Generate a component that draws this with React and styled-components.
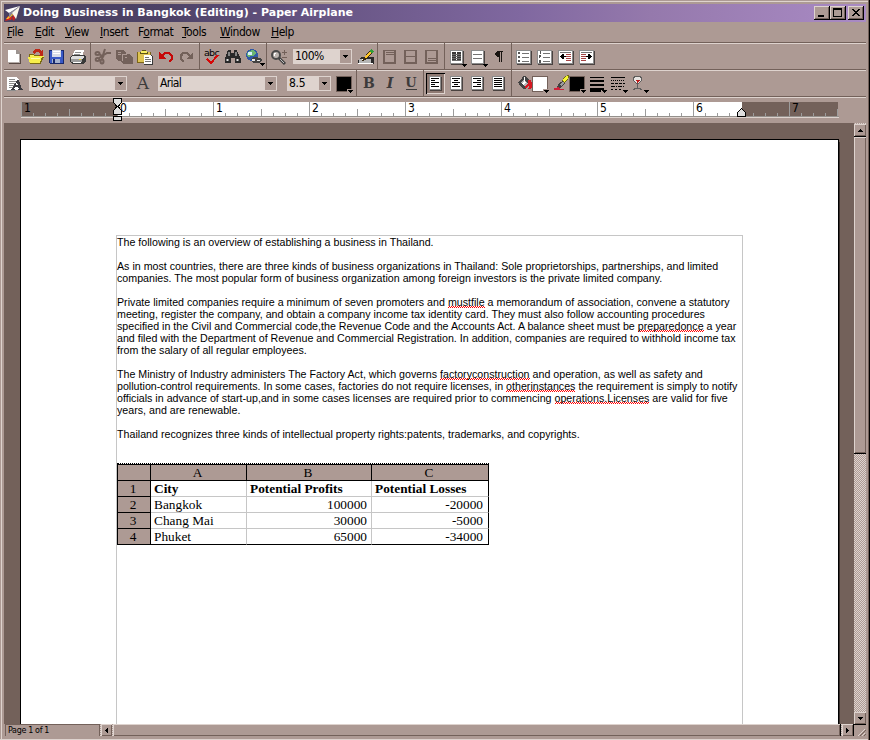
import React from "react";
import styled, { createGlobalStyle, css } from "styled-components";

const face = "#ad9a94";
const light = "#ded3ce";
const dark = "#73615a";

const GlobalStyle = createGlobalStyle`
  * { box-sizing: border-box; }
  body { margin: 0; background: ${face}; }
`;

const checker = css`
  background: repeating-conic-gradient(${light} 0 25%, ${face} 0 50%) 0 0 / 2px 2px;
`;

const raised = css`
  background: ${face};
  box-shadow: inset 1px 1px 0 ${light}, inset -1px -1px 0 ${dark};
`;

const Window = styled.div`
  width: 870px;
  height: 740px;
  overflow: hidden;
  display: flex;
  flex-direction: column;
  padding: 4px 4px 0;
  background: ${face};
  box-shadow: inset -1px 0 0 #000, inset -2px 0 0 ${dark}, inset 0 -1px 0 ${light},
    inset 1px 1px 0 ${face}, inset 2px 2px 0 ${light};
  font-family: "DejaVu Sans Condensed", "DejaVu Sans", sans-serif;
  font-size: 12px;
  letter-spacing: -0.45px;
  color: #000;
`;

const TitleBar = styled.header`
  flex: none;
  display: flex;
  align-items: center;
  height: 18px;
  background: linear-gradient(90deg, #493f60 0, #4d4266 19%, #63527f 33%, #8068a0 60%, #9579ac 75%, #a98ac4 100%);
  color: #fff;
`;

const TitleText = styled.h1`
  flex: 1;
  margin: 0 0 0 2px;
  font: bold 11px/18px "DejaVu Sans", sans-serif;
  letter-spacing: 0.01px;
`;

const Captions = styled.div`
  display: flex;
  padding-right: 2px;
`;

const CaptionButton = styled.button`
  width: 16px;
  height: 14px;
  padding: 0;
  border: 0;
  margin-left: ${(p) => (p.$gap ? 2 : 0)}px;
  background: ${face};
  box-shadow: inset -1px -1px 0 #000, inset 1px 1px 0 ${light}, inset -2px -2px 0 ${dark};
  svg { display: block; }
`;

const MenuBar = styled.nav`
  flex: none;
  display: flex;
  height: 20px;
  padding: 1px 0 0 3px;
  line-height: 18px;
`;

const MenuItem = styled.span`
  width: ${(p) => p.$w}px;
  white-space: nowrap;
`;

const Mnemonic = styled.u`
  text-underline-offset: 1px;
  text-decoration-thickness: 1px;
`;

const Toolbar = styled.div`
  flex: none;
  display: flex;
  height: 27px;
  border-top: 1px solid ${dark};
  box-shadow: inset 0 1px 0 ${light};
`;

const Group = styled.div`
  flex: none;
  display: flex;
  align-items: center;
  width: ${(p) => p.$w}px;
  padding: 1px 0 0 ${(p) => p.$pad ?? 0}px;
  border-right: ${(p) => (p.$last ? "0" : `1px solid ${dark}`)};
`;

const Tool = styled.button`
  flex: none;
  width: ${(p) => p.$w ?? 21}px;
  height: 21px;
  padding: 0;
  border: 0;
  margin-left: ${(p) => p.$ml ?? 0}px;
  background: none;
  svg { display: block; overflow: visible; }
  ${(p) =>
    p.$pressed &&
    css`
      width: 19px;
      margin: 0 1px;
      background: #8f7a73;
      box-shadow: inset 1px 1px 0 #000, inset -1px -1px 0 ${light};
      svg { margin-left: -1px; }
    `}
`;

const Combo = styled.div`
  flex: none;
  display: flex;
  width: ${(p) => p.$w}px;
  height: 15px;
  margin-left: ${(p) => p.$ml ?? 0}px;
  border: 1px solid ${light};
  background: ${light};
  line-height: 13px;
`;

const ComboText = styled.span`
  flex: 1;
  padding-left: ${(p) => p.$pl ?? 1}px;
  letter-spacing: ${(p) => p.$ls ?? -0.7}px;
`;

const ComboArrow = styled.span`
  display: grid;
  place-items: center;
  width: 11px;
  height: 13px;
  background: ${face};
`;

const RulerBand = styled.div`
  flex: none;
  display: flex;
  height: 27px;
  padding: 5px 0 0 17px;
  border-top: 1px solid ${dark};
  box-shadow: inset 0 1px 0 ${light};
`;

const RulerScale = styled.div`
  position: relative;
  display: flex;
  width: 818px;
  height: 16px;
  border-bottom: 1px solid ${light};
  box-shadow: inset 0 -1px 0 #94908c;
`;

const Inch = styled.div`
  flex: none;
  width: ${(p) => p.$w ?? 96}px;
  height: 14px;
  padding-left: 3px;
  font: 12px/12px "DejaVu Sans Condensed", sans-serif;
  background:
    linear-gradient(#9c9c9c, #9c9c9c) 0 0 / 1px 14px no-repeat,
    linear-gradient(#9c9c9c, #9c9c9c) 48px 100% / 1px 7px no-repeat,
    repeating-linear-gradient(90deg, #9c9c9c 0 1px, transparent 1px 12px) 0 100% / 100% 3px no-repeat,
    linear-gradient(90deg, #fff ${(p) => p.$paper ?? 96}px, ${dark} ${(p) => p.$paper ?? 96}px);
`;

const Marker = styled.svg`
  position: absolute;
  left: ${(p) => p.$x}px;
  top: ${(p) => p.$y}px;
  display: block;
`;

const Workspace = styled.div`
  flex: none;
  display: flex;
  width: 862px;
  height: 601px;
`;

const Desk = styled.main`
  flex: none;
  width: 850px;
  height: 601px;
  padding: 16px 0 0 16px;
  overflow: hidden;
  background: ${dark};
`;

const Page = styled.article`
  width: 819px;
  height: 700px;
  padding: 95px 0 0 95px;
  border: 1px solid #000;
  background: #fff;
  box-shadow: 1px 3px 0 #39302c;
`;

const Frame = styled.section`
  width: 627px;
  height: 600px;
  border: 1px solid #c6c6c6;
  font: 10.67px/12px "Liberation Sans", Arial, sans-serif;
  letter-spacing: 0.006px;
`;

const Paragraph = styled.p`
  margin: 0 0 12px;
  white-space: nowrap;
`;

const Line = styled.span`
  display: block;
  height: 12px;
`;

const Misspelled = styled.span`
  background: repeating-conic-gradient(#ff0000 0 25%, transparent 0 50%) 0 100% / 2px 2px repeat-x;
`;

const Sheet = styled.div`
  display: grid;
  grid-template-columns: 34px 96px 125px 117px;
  grid-template-rows: 17px repeat(4, 16px);
  width: 372px;
  height: 82px;
  margin-top: 23px;
  border-top: 1px dotted #000;
  font: 13.33px/16px "Liberation Serif", "Times New Roman", serif;
  letter-spacing: 0;
`;

const HeadCell = styled.div`
  padding-right: 2px;
  background: ${face};
  border: solid #000;
  border-width: ${(p) => (p.$top ? 1 : 0)}px 1px 1px ${(p) => (p.$left ? 1 : 0)}px;
  text-align: center;
  line-height: 16px;
`;

const Cell = styled.div`
  padding: 0 ${(p) => (p.$edge ? 5 : 4)}px 0 3px;
  border-right: 1px solid ${(p) => (p.$edge ? "#000" : "#c6c6c6")};
  border-bottom: 1px solid ${(p) => (p.$bottom ? "#000" : "#c6c6c6")};
  text-align: ${(p) => (p.$num ? "right" : "left")};
  font-weight: ${(p) => (p.$bold ? "bold" : "normal")};
  white-space: nowrap;
`;

const VScroll = styled.div`
  display: flex;
  flex-direction: column;
  width: 12px;
  height: 601px;
  padding-top: 1px;
  ${checker}
`;

const ScrollButton = styled.button`
  flex: none;
  display: grid;
  place-items: center;
  width: ${(p) => p.$w ?? 12}px;
  height: 12px;
  padding: 0;
  border: 0;
  ${raised}
`;

const VThumb = styled.div`
  flex: none;
  height: 318px;
  margin-bottom: auto;
  border: solid #000;
  border-width: 1px 0;
  ${raised}
`;

const Footer = styled.footer`
  flex: none;
  display: flex;
  height: 12px;
  padding-left: 1px;
`;

const PageStatus = styled.div`
  flex: none;
  width: 95px;
  padding-left: 2px;
  border: solid ${dark};
  border-width: 1px 1px 0;
  font: 8px/11px "DejaVu Sans", sans-serif;
  letter-spacing: -0.35px;
`;

const HScroll = styled.div`
  flex: none;
  display: flex;
  width: 753px;
  padding-left: 1px;
  ${checker}
`;

const HThumb = styled.div`
  flex: none;
  width: 728px;
  height: 12px;
  margin: 0 1px 0 1px;
  border-right: 1px solid #000;
  ${raised}
`;

const Grip = styled.div`
  flex: none;
  width: 13px;
  height: 12px;
  border: solid #000;
  border-width: 1px 0 0 1px;
  background: ${face};
  svg { display: block; }
`;

function Icon({ children, w = 21, h = 21 }) {
  return (
    <svg width={w} height={h} viewBox={`0 0 ${w} ${h}`} shapeRendering="crispEdges">
      {children}
    </svg>
  );
}

const arrowPaths = {
  down: "M0 1h5v1h-1v1h-1v1h-1v-1h-1v-1h-1z",
  up: "M0 4h5v-1h-1v-1h-1v-1h-1v1h-1v1h-1z",
  left: "M4 0v5h-1v-1h-1v-1h-1v-1h1v-1h1v-1z",
  right: "M1 0v5h1v-1h1v-1h1v-1h-1v-1h-1v-1z",
};

const Arrow = ({ dir = "down" }) => (
  <Icon w={5} h={5}>
    <path d={arrowPaths[dir]} />
  </Icon>
);

const Drop = ({ x = 17, y = 17 }) => <path d={`M${x} ${y}h5v1h-1v1h-1v1h-1v-1h-1v-1h-1z`} fill="#000" />;

const Sheetlet = ({ x = 4, y = 4, w = 12, h = 13 }) => (
  <>
    <path d={`M${x + 1} ${y + 1}h${w}v${h}h-${w}z`} fill="#4a4240" />
    <path d={`M${x} ${y}h${w}v${h}h-${w}z`} fill="#8c8c8c" />
    <path d={`M${x + 1} ${y + 1}h${w - 2}v${h - 2}h-${w - 2}z`} fill="#fff" />
  </>
);

const Rows = ({ rows, color = "#000" }) => (
  <path d={rows.map(([x, y, w]) => `M${x} ${y}h${w}v1h-${w}z`).join("")} fill={color} />
);

const PlaneIcon = () => (
  <svg width="17" height="17" viewBox="0 0 17 17">
    <path d="M1 16l3-5 4 1-1 3-2 0z" fill="#d8241c" />
    <path d="M2 14l6-6 1 2-5 4z" fill="#ffc62c" />
    <path d="M9 10l3 1-2 5-2-2z" fill="#c62020" />
    <path d="M16 1L1 5l4 3 2-1z" fill="#fff" />
    <path d="M16 1L5 8v5l3-4z" fill="#8a8698" />
    <path d="M16 1L8 8l4 6z" fill="#fbf6ea" />
  </svg>
);

const NewIcon = () => (
  <Icon>
    <path d="M5 5h9l3 4v9H5z" fill="#5a4a45" />
    <path d="M4 4h8l4 4v9H4z" fill="#fff" />
    <path d="M12 4v4h4v-1l-3-3z" fill="#9c9490" />
    <path d="M4 16h12v1H4zM15 8h1v9h-1z" fill="#b5aca8" />
  </Icon>
);

const OpenIcon = () => (
  <Icon>
    <path d="M4 8h4l1 1h6v5H4z" fill="#f7ee63" stroke="#7b6b10" />
    <path d="M3 11l3-1h13l-3 7H5z" fill="#f7ee4a" />
    <path d="M5 17h11v1H5zM17 11h2l-3 6h-1z" fill="#7b6b10" />
    <path d="M7 6l3-3h4l2 2 2-1v6h-5l2-2-2-2h-2l-2 2z" fill="#bd2818" />
    <path d="M6 12h9v1H6z" fill="#fffbb0" />
  </Icon>
);

const SaveIcon = () => (
  <Icon>
    <path d="M3 4h15v14H4l-1-1z" fill="#18286b" />
    <path d="M4 5h13v12H4z" fill="#3959c6" />
    <path d="M6 4h9v7H6z" fill="#d6dbe7" />
    <path d="M7 5h7v1H7zM7 7h7v1H7z" fill="#fff" />
    <path d="M6 13h8v4H6z" fill="#a5b2ce" />
    <path d="M7 13h2v4H7z" fill="#18286b" />
  </Icon>
);

const PrintIcon = () => (
  <Icon>
    <path d="M8 4h9l-2 7H5z" fill="#fff" />
    <path d="M8 6h6v1H8zM7 8h6v1H7z" fill="#8c8c8c" />
    <path d="M3 11l3-2h12l1 2v4l-3 3H5l-2-2z" fill="#393939" />
    <path d="M4 11l2-1h11v1l-2 2H4z" fill="#dedede" />
    <path d="M4 13h11v3H4z" fill="#9c9c9c" />
    <path d="M6 16h8v1H6z" fill="#fff" />
    <path d="M12 13h2v1h-2z" fill="#e7d221" />
  </Icon>
);

const CutIcon = () => (
  <Icon>
    <g fill="none" stroke={dark} strokeWidth="2" shapeRendering="auto">
      <path d="M19 7h-4L7 12M13 3l-2 6-1 4" />
      <ellipse cx="5.500" cy="7.500" rx="2" ry="1.500" />
      <path d="M7 8l5 3" />
      <ellipse cx="5.500" cy="13.500" rx="1.800" ry="1.500" />
      <ellipse cx="10" cy="15.500" rx="1.500" ry="2" />
    </g>
  </Icon>
);

const CopyIcon = () => (
  <Icon>
    <path d="M3 4h7l3 3v8H5l-2-2z" fill={dark} />
    <path d="M8 8h8l4 3v7h-10l-2-2z" fill={dark} />
    <path d="M5 6h3v1H5zM5 8h3v1H5zM9 8h4v-1h1v2h-4v6h-1zM12 11h2v1h-2z" fill={face} />
  </Icon>
);

const PasteIcon = () => (
  <Icon>
    <path d="M3 6h14v11H3z" fill="#7b6518" />
    <path d="M4 6h12v10H4z" fill="#dec352" />
    <path d="M6 6h8v2H6zM8 4h4v2H8z" fill="#5a5218" />
    <path d="M7 5h6v2H7z" fill="#f7ee63" />
    <path d="M10 9h7l2 2v8h-9z" fill="#393939" />
    <path d="M10 9h6l2 2v7h-8z" fill="#fff" />
    <Rows rows={[[11, 11, 4], [11, 13, 6], [11, 15, 6]]} color="#737373" />
  </Icon>
);

const UndoIcon = () => (
  <Icon>
    <path d="M4 6v7h7z" fill="#c60808" />
    <path d="M6 11l4-4h4l3 3v3l-3 3" fill="none" stroke="#c60808" strokeWidth="2.500" />
  </Icon>
);

const RedoIcon = () => (
  <Icon>
    <path d="M17 6v7h-7z" fill={dark} />
    <path d="M15 11l-4-4H7L5 10v3l3 3" fill="none" stroke={dark} strokeWidth="2.500" />
  </Icon>
);

const SpellText = styled.text`
  font: 9.5px "DejaVu Sans", sans-serif;
  letter-spacing: -0.7px;
`;

const SpellIcon = () => (
  <Icon>
    <SpellText x="3" y="10">abc</SpellText>
    <path d="M6 13l4 4 7-8" fill="none" stroke="#d60808" strokeWidth="2" />
  </Icon>
);

const BinocularIcon = () => (
  <Icon>
    <path d="M6 4h3v3h3V4h3l1 3 3 6v4h-6v-5h-4v5H3v-4l2-6z" fill="#292929" />
    <path d="M6 6h2v4H6zM13 6h2v4h-2zM4 13h3v2H4zM14 13h3v2h-3z" fill="#848484" />
    <path d="M5 13h1v2H5zM15 13h1v2h-1z" fill="#dedede" />
  </Icon>
);

const GlobeIcon = () => (
  <Icon>
    <circle cx="9" cy="9" r="6" fill="#3159a5" />
    <path d="M6 5l4-1 3 3-2 3-3 0-3 1-1-3z" fill="#6bb573" />
    <path d="M5 6h4v3H5z" fill="#d6f2ff" />
    <path d="M8 13l3-2h3l1 1h2l2 2-2 3h-7z" fill="#424242" />
    <path d="M9 13h3v2H9zM14 14h3v1h-3z" fill="#e7e7e7" />
    <Drop x={17} y={17} />
  </Icon>
);

const ZoomIcon = () => (
  <Icon>
    <g shapeRendering="auto">
      <circle cx="8" cy="9" r="4" fill="#bdb6b2" stroke="#4a4a4a" strokeWidth="2" />
      <path d="M11 12l6 6" stroke="#424242" strokeWidth="3" />
      <path d="M12 13l4 4" stroke="#bdbdbd" />
    </g>
    <path d="M6 7h2v1H7v2H6z" fill="#fff" />
    <path d="M14 6h5v1h-5zM16 4h1v5h-1zM14 11h5v1h-5z" fill={dark} />
  </Icon>
);

const DrawIcon = () => (
  <Icon>
    <path d="M6 11h13v6l-1 1H3v-3z" fill="#292929" />
    <path d="M4 13h12v4H4z" fill="#b5b5b5" />
    <path d="M3 17h15v1H3zM7 13h3v1H7z" fill="#fff" />
    <path d="M8 13l7-9 3 2-7 8-4 1z" fill="#392910" />
    <path d="M10 11l5-6 2 1-6 7z" fill="#ffc629" />
    <path d="M14 5l2-2 3 2-2 2z" fill="#319e39" />
  </Icon>
);

const PaneIcon = ({ rows }) => (
  <Icon>
    <path d="M4 4h13v14H4z" fill={dark} />
    <path d="M6 5h9v11H6z" fill={face} />
    <Rows rows={rows} color={dark} />
  </Icon>
);

const TableIcon = () => (
  <Icon>
    <Sheetlet x={4} y={4} w={13} h={14} />
    <path d="M6 6h4v9H6zM11 6h4v9h-4z" fill="#393939" />
    <Rows rows={[[6, 8, 9], [6, 10, 9], [6, 12, 9], [6, 14, 9]]} color="#6b6b6b" />
    <Drop x={16} y={18} />
  </Icon>
);

const SectionIcon = () => (
  <Icon>
    <Sheetlet x={4} y={4} w={13} h={14} />
    <Rows rows={[[6, 8, 9], [6, 12, 9]]} color="#737373" />
    <Drop x={16} y={18} />
  </Icon>
);

const PilcrowIcon = () => (
  <Icon>
    <path d="M9 5h6v1h-1v10h-1V6h-1v10h-1v-5H9l-2-2V7z" fill="#181410" />
  </Icon>
);

const ListIcon = ({ numbered }) => (
  <Icon>
    <Sheetlet x={3} y={4} w={15} h={14} />
    <Rows rows={[[9, 7, 7], [9, 11, 7], [9, 15, 7]]} color="#737373" />
    {numbered ? (
      <path d="M6 5h1v3H6zM5 9h2v2H6v1H5zM5 14h2v3H5z" fill="#555" />
    ) : (
      <path d="M5 6h2v2H5zM5 10h2v2H5zM5 14h2v2H5z" fill="#555" />
    )}
  </Icon>
);

const IndentIcon = ({ right }) => (
  <Icon>
    <Sheetlet x={3} y={4} w={15} h={14} />
    <Rows rows={[[5, 6, 11]]} color="#737373" />
    <Rows rows={[8, 10, 12, 14].map((y) => [right ? 5 : 11, y, 5])} color="#a54242" />
    <path d={right ? "M10 10h2V8h1l3 2v1l-3 2h-1v-2h-2z" : "M11 10H9V8H8l-3 2v1l3 2h1v-2h2z"} />
  </Icon>
);

const AlignIcon = ({ rows }) => (
  <Icon>
    <Sheetlet x={4} y={3} w={12} h={14} />
    <Rows rows={rows} />
  </Icon>
);

const StyleIcon = () => (
  <Icon>
    <path d="M3 4h9l3 3v10H3z" fill="#fff" />
    <Rows rows={[[5, 6, 6], [5, 8, 7], [5, 10, 6], [5, 12, 5], [5, 14, 4], [3, 17, 9]]} color="#8c8c8c" />
    <path d="M13 7h2l3 9h1v1h-5v-1h1l-1-2h-3l-1 2h1v1H7v-1h1z" fill="#39393f" />
    <path d="M12 12h2l-1-3z" fill="#fff" />
  </Icon>
);

const Glyph = styled.text`
  font: ${(p) => p.$style ?? "normal"} ${(p) => p.$weight ?? "bold"} ${(p) => p.$size ?? 14}px "DejaVu Serif", serif;
  letter-spacing: 0;
  fill: #3d3b3b;
`;

const LetterIcon = ({ ch, style, weight, size, y = 15, underline }) => (
  <Icon>
    <Glyph x={10} y={y} textAnchor="middle" $style={style} $weight={weight} $size={size}>
      {ch}
    </Glyph>
    {underline && <path d="M5 16h11v1H5z" fill="#3d3b3b" />}
  </Icon>
);

const SwatchIcon = ({ fill }) => (
  <Icon w={18}>
    <path d="M0 3h16v16H0z" fill={dark} />
    <path d="M1 4h14v14H1z" fill={fill} />
    <path d="M11 16h6v4h-6z" fill={face} />
    <Drop x={12} y={17} />
  </Icon>
);

const BucketIcon = () => (
  <Icon w={16}>
    <path d="M1 9l3-2 2-4h2l6 6-1 2-5 5H6l-4-5z" fill="#424242" />
    <path d="M4 9l3-2 4 3-3 4z" fill="#b5b5b5" />
    <path d="M5 10l2-2 2 1-3 3zM7 4h1v4H7z" fill="#fff" />
    <path d="M11 7h3v2h1v6h-1v1h-3v-1h1v-3l-3 3H8v-1l3-4z" fill="#d61821" />
  </Icon>
);

const BrushIcon = () => (
  <Icon w={16}>
    <path d="M0 16v-1h2l1-1h4l-1 2h4v1H0z" fill="#ce2139" />
    <path d="M3 14l3-5 3-1 2 2-2 3-3 2z" fill="#424242" />
    <path d="M6 11l3-2 1 1-3 3z" fill="#9c9c9c" />
    <path d="M8 8l3-5 3-1 1 1-1 4-4 3z" fill="#736b10" />
    <path d="M9 7l3-4h2v3l-4 3z" fill="#f7f731" />
  </Icon>
);

const WeightIcon = () => (
  <Icon>
    <path d="M3 4h14v1H3zM3 7h14v2H3zM3 11h14v2H3zM3 15h14v4H3z" />
    <path d="M14 17h7v4h-7z" fill={face} />
    <Drop x={15} y={17} />
  </Icon>
);

const DashIcon = () => (
  <Icon>
    <path d="M3 4.500h14" stroke="#000" />
    <path d="M3 7.500h14" stroke="#000" strokeDasharray="1 1" />
    <path d="M3 10.500h14" stroke="#000" strokeDasharray="3 1" />
    <path d="M3 13.500h14" stroke="#000" strokeDasharray="4 1 1 1" />
    <path d="M3 16.500h11" stroke="#000" strokeDasharray="2 2" />
    <Drop x={15} y={17} />
  </Icon>
);

const WineIcon = () => (
  <Icon>
    <path d="M5 3h7v1h1v4h-1v1h-1v1h-1v1H9v4h3v1h1v1h-2v-1H6v1H4v-1h1v-1h3v-4H7v-1H6V9H5V8H4V4h1z" fill="#5f5d5c" />
    <path d="M6 4h5v1h1v3h-1v1h-1v1H7V9H6V8H5V5h1z" fill="#e7e4e2" />
    <path d="M7 7h4v1h-1v1H9v1H8V8H7z" fill="#bd1818" />
    <Drop x={15} y={17} />
  </Icon>
);

const menus = [
  ["", "F", "ile", 28],
  ["", "E", "dit", 30],
  ["", "V", "iew", 35],
  ["", "I", "nsert", 38],
  ["F", "o", "rmat", 44],
  ["", "T", "ools", 38],
  ["", "W", "indow", 51],
  ["", "H", "elp", 30],
];

/* Words between asterisks are flagged by the spell checker. */
const paragraphs = [
  ["The following is an overview of establishing a business in Thailand."],
  [
    "As in most countries, there are three kinds of business organizations in Thailand: Sole proprietorships, partnerships, and limited",
    "companies. The most popular form of business organization among foreign investors is the private limited company.",
  ],
  [
    "Private limited companies require a minimum of seven promoters and *mustfile* a memorandum of association, convene a statutory",
    "meeting, register the company, and obtain a company income tax identity card. They must also follow accounting procedures",
    "specified in the Civil and Commercial code,the Revenue Code and the Accounts Act. A balance sheet must be *preparedonce* a year",
    "and filed with the Department of Revenue and Commercial Registration. In addition, companies are required to withhold income tax",
    "from the salary of all regular employees.",
  ],
  [
    "The Ministry of Industry administers The Factory Act, which governs *factoryconstruction* and operation, as well as safety and",
    "pollution-control requirements. In some cases, factories do not require licenses, in *otherinstances* the requirement is simply to notify",
    "officials in advance of start-up,and in some cases licenses are required prior to commencing *operations.Licenses* are valid for five",
    "years, and are renewable.",
  ],
  ["Thailand recognizes three kinds of intellectual property rights:patents, trademarks, and copyrights."],
];

const sheetRows = [
  ["City", "Potential Profits", "Potential Losses"],
  ["Bangkok", "100000", "-20000"],
  ["Chang Mai", "30000", "-5000"],
  ["Phuket", "65000", "-34000"],
];

const alignments = [
  [[6, 5, 8], [6, 7, 4], [6, 9, 8], [6, 11, 4], [6, 13, 8]],
  [[6, 5, 8], [8, 7, 4], [6, 9, 8], [8, 11, 4], [6, 13, 8]],
  [[6, 5, 8], [10, 7, 4], [6, 9, 8], [10, 11, 4], [6, 13, 8]],
  [[6, 5, 8], [6, 7, 8], [6, 9, 8], [6, 11, 8], [6, 13, 8]],
];

const panes = [
  [[7, 6, 8], [7, 8, 8]],
  [[6, 10, 9]],
  [[7, 12, 8], [7, 14, 8]],
];

const renderLine = (text) =>
  text.split("*").map((part, i) => (i % 2 ? <Misspelled key={i}>{part}</Misspelled> : part));

export default function App() {
  return (
    <>
      <GlobalStyle />
      <Window>
        <TitleBar>
          <PlaneIcon />
          <TitleText>Doing Business in Bangkok (Editing) - Paper Airplane</TitleText>
          <Captions>
            <CaptionButton aria-label="Minimize">
              <Icon w={16} h={14}><path d="M4 9h6v2H4z" /></Icon>
            </CaptionButton>
            <CaptionButton aria-label="Maximize">
              <Icon w={16} h={14}><path d="M3 2h9v9H3zM4 4v6h7V4z" fillRule="evenodd" /></Icon>
            </CaptionButton>
            <CaptionButton aria-label="Close" $gap>
              <Icon w={16} h={14}>
                <path d="M4 3h2v1h1v1h2V4h1V3h2v1h-1v1h-1v1H9v1h1v1h1v1h1v1h-2V9H9V8H7v1H6v1H4V9h1V8h1V7h1V6H6V5H5V4H4z" />
              </Icon>
            </CaptionButton>
          </Captions>
        </TitleBar>

        <MenuBar>
          {menus.map(([pre, key, rest, w]) => (
            <MenuItem key={key + rest} $w={w}>
              {pre}
              <Mnemonic>{key}</Mnemonic>
              {rest}
            </MenuItem>
          ))}
        </MenuBar>

        <Toolbar>
          <Group $w={87}>
            <Tool><NewIcon /></Tool>
            <Tool><OpenIcon /></Tool>
            <Tool><SaveIcon /></Tool>
            <Tool><PrintIcon /></Tool>
          </Group>
          <Group $w={109} $pad={1}>
            <Tool><CutIcon /></Tool>
            <Tool><CopyIcon /></Tool>
            <Tool><PasteIcon /></Tool>
            <Tool><UndoIcon /></Tool>
            <Tool><RedoIcon /></Tool>
          </Group>
          <Group $w={67} $pad={1}>
            <Tool><SpellIcon /></Tool>
            <Tool><BinocularIcon /></Tool>
            <Tool><GlobeIcon /></Tool>
          </Group>
          <Group $w={111} $pad={1}>
            <Tool><ZoomIcon /></Tool>
            <Combo $w={59} $ml={4}>
              <ComboText $ls={-0.5}>100%</ComboText>
              <ComboArrow><Arrow /></ComboArrow>
            </Combo>
            <Tool $ml={3}><DrawIcon /></Tool>
          </Group>
          <Group $w={67} $pad={1}>
            {panes.map((rows, i) => (
              <Tool key={i}><PaneIcon rows={rows} /></Tool>
            ))}
          </Group>
          <Group $w={67} $pad={1}>
            <Tool><TableIcon /></Tool>
            <Tool><SectionIcon /></Tool>
            <Tool><PilcrowIcon /></Tool>
          </Group>
          <Group $w={90} $pad={1} $last>
            <Tool><ListIcon /></Tool>
            <Tool><ListIcon numbered /></Tool>
            <Tool><IndentIcon /></Tool>
            <Tool><IndentIcon right /></Tool>
          </Group>
        </Toolbar>

        <Toolbar>
          <Group $w={353}>
            <Tool><StyleIcon /></Tool>
            <Combo $w={98} $ml={4}>
              <ComboText>Body+</ComboText>
              <ComboArrow><Arrow /></ComboArrow>
            </Combo>
            <Tool $ml={6}><LetterIcon ch="A" weight="normal" size={17} y={16} /></Tool>
            <Combo $w={119} $ml={4}>
              <ComboText>Arial</ComboText>
              <ComboArrow><Arrow /></ComboArrow>
            </Combo>
            <Combo $w={44} $ml={10}>
              <ComboText $ls={-0.3}>8.5</ComboText>
              <ComboArrow><Arrow /></ComboArrow>
            </Combo>
            <Tool $w={18} $ml={5}><SwatchIcon fill="#000" /></Tool>
          </Group>
          <Group $w={67} $pad={2}>
            <Tool><LetterIcon ch="B" /></Tool>
            <Tool><LetterIcon ch="I" style="italic" /></Tool>
            <Tool><LetterIcon ch="U" size={13} y={14} underline /></Tool>
          </Group>
          <Group $w={88} $pad={1}>
            {alignments.map((rows, i) => (
              <Tool key={i} $pressed={i === 0}><AlignIcon rows={rows} /></Tool>
            ))}
          </Group>
          <Group $w={150} $pad={5} $last>
            <Tool $w={16}><BucketIcon /></Tool>
            <Tool $w={18} $ml={-1}><SwatchIcon fill="#fff" /></Tool>
            <Tool $w={16} $ml={4}><BrushIcon /></Tool>
            <Tool $w={18} $ml={-1}><SwatchIcon fill="#000" /></Tool>
            <Tool><WeightIcon /></Tool>
            <Tool><DashIcon /></Tool>
            <Tool><WineIcon /></Tool>
          </Group>
        </Toolbar>

        <RulerBand>
          <RulerScale>
            <Inch $paper={0}>1</Inch>
            {[0, 1, 2, 3, 4, 5].map((n) => (
              <Inch key={n}>{n}</Inch>
            ))}
            <Inch $paper={49}>6</Inch>
            <Inch $w={49} $paper={0}>7</Inch>
            <Marker $x={92} $y={-4} width="9" height="24" viewBox="0 0 9 24" shapeRendering="crispEdges">
              <path d="M0.500 0.500h8v4l-3.500 4 3.500 4v4h-8v-4l3.500-4-3.500-4z" fill="#dedede" stroke="#000" />
              <path d="M0.500 18.500h8v4h-8z" fill="#dedede" stroke="#000" />
            </Marker>
            <Marker $x={716} $y={6} width="9" height="9" viewBox="0 0 9 9" shapeRendering="crispEdges">
              <path d="M4.500 0.500l4 4v4h-8v-4z" fill="#dedede" stroke="#000" />
            </Marker>
          </RulerScale>
        </RulerBand>

        <Workspace>
          <Desk>
            <Page>
              <Frame>
                {paragraphs.map((lines, i) => (
                  <Paragraph key={i}>
                    {lines.map((text) => (
                      <Line key={text}>{renderLine(text)}</Line>
                    ))}
                  </Paragraph>
                ))}
                <Sheet>
                  <HeadCell $top $left />
                  <HeadCell $top>A</HeadCell>
                  <HeadCell $top>B</HeadCell>
                  <HeadCell $top>C</HeadCell>
                  {sheetRows.map((row, r) => (
                    <React.Fragment key={row[0]}>
                      <HeadCell $left>{r + 1}</HeadCell>
                      {row.map((value, c) => (
                        <Cell key={c} $bold={r === 0} $num={r > 0 && c > 0} $edge={c === 2} $bottom={r === 3}>
                          {value}
                        </Cell>
                      ))}
                    </React.Fragment>
                  ))}
                </Sheet>
              </Frame>
            </Page>
          </Desk>
          <VScroll>
            <ScrollButton aria-label="Scroll up"><Arrow dir="up" /></ScrollButton>
            <VThumb />
            <ScrollButton aria-label="Scroll down"><Arrow /></ScrollButton>
          </VScroll>
        </Workspace>

        <Footer>
          <PageStatus>Page 1 of 1</PageStatus>
          <HScroll>
            <ScrollButton aria-label="Scroll left" $w={11}><Arrow dir="left" /></ScrollButton>
            <HThumb />
            <ScrollButton aria-label="Scroll right" $w={11}><Arrow dir="right" /></ScrollButton>
          </HScroll>
          <Grip>
            <Icon w={12} h={11}>
              <path d="M11 4l-7 7M11 8l-3 3" stroke={light} />
              <path d="M11.500 5.500l-6 6M11.500 9.500l-2 2" stroke={dark} />
            </Icon>
          </Grip>
        </Footer>
      </Window>
    </>
  );
}
